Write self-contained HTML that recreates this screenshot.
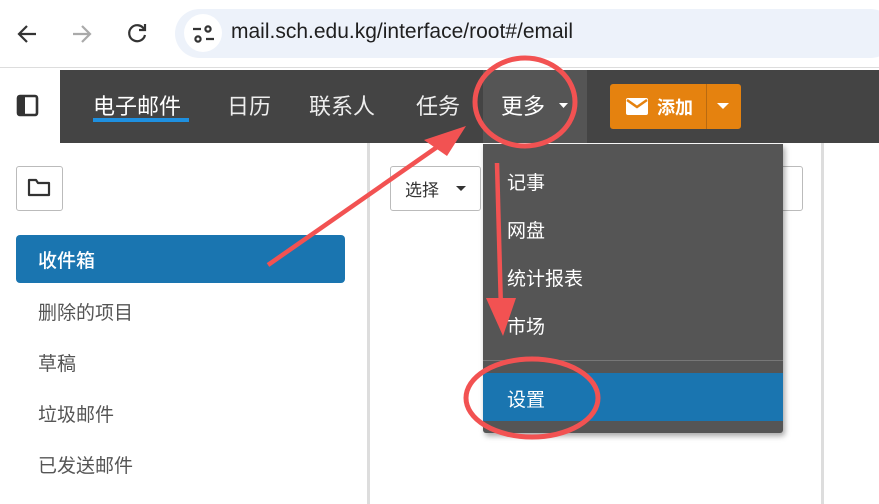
<!DOCTYPE html>
<html><head><meta charset="utf-8"><style>
*{margin:0;padding:0;box-sizing:border-box}
body{width:879px;height:504px;overflow:hidden;background:#fff;font-family:"Liberation Sans","Noto Sans CJK SC",sans-serif;position:relative}
.a{position:absolute}
.cn{font-family:"Noto Sans CJK SC",sans-serif}
</style></head><body>
<div class="a" style="left:0;top:0;width:879px;height:68px;background:#fff;border-bottom:1px solid #ddd"></div>
<div class="a" style="left:175px;top:9px;width:720px;height:49px;background:#edf2fa;border-radius:25px"></div>
<div class="a" style="left:184px;top:14px;width:38px;height:38px;background:#fff;border-radius:50%"></div>
<svg class="a" style="left:0;top:0" width="230" height="68">
<g fill="none" stroke="#333" stroke-width="2.2">
<path d="M36 34H20M27 26l-8 8 8 8"/>
<path d="M73 34h16M82 26l8 8-8 8" stroke="#aaa"/>
<path d="M144 29a8 8 0 1 0 1 6" /><path d="M145 24v6h-6"/>
<path d="M193 29h8M206 39h8"/>
<circle cx="208" cy="29" r="2.6"/><circle cx="198" cy="39" r="2.6"/>
</g>
</svg>
<div class="a" style="left:231px;top:20px;font-size:21px;color:#1f1f1f">mail.sch.edu.kg/interface/root#/email</div>
<svg class="a" style="left:16px;top:94px" width="24" height="24"><rect x="2" y="2" width="19" height="19" rx="2" fill="none" stroke="#333" stroke-width="2.6"/><rect x="3" y="3" width="6" height="17" fill="#333"/></svg>
<div class="a" style="left:60px;top:70px;width:819px;height:73px;background:#444"></div>
<div class="a" style="left:483px;top:70px;width:104px;height:73px;background:#555"></div>
<div class="a cn" style="left:93px;top:89px;font-size:22px;color:#fff">电子邮件</div>
<div class="a" style="left:93px;top:118px;width:96px;height:4px;background:#1e90e0"></div>
<div class="a cn" style="left:227px;top:89px;font-size:22px;color:#eee">日历</div>
<div class="a cn" style="left:309px;top:89px;font-size:22px;color:#eee">联系人</div>
<div class="a cn" style="left:416px;top:89px;font-size:22px;color:#eee">任务</div>
<div class="a cn" style="left:501px;top:89px;font-size:22px;color:#fff">更多</div>
<svg class="a" style="left:558px;top:102px" width="12" height="8"><path d="M1 1h9l-4.5 5z" fill="#fff"/></svg>
<div class="a" style="left:610px;top:84px;width:131px;height:45px;background:#e5820f;border-radius:3px"></div>
<div class="a" style="left:706px;top:84px;width:1px;height:45px;background:#b96a10"></div>
<svg class="a" style="left:626px;top:98px" width="22" height="17"><rect x="0" y="0" width="22" height="17" rx="2" fill="#fff"/><path d="M1 2l10 7 10-7" fill="none" stroke="#e5820f" stroke-width="2.5"/></svg>
<div class="a cn" style="left:657px;top:94px;font-size:18px;color:#fff;font-weight:bold">添加</div>
<svg class="a" style="left:716px;top:102px" width="14" height="8"><path d="M1 1h12l-6 6z" fill="#fff"/></svg>
<div class="a" style="left:16px;top:166px;width:47px;height:45px;border:1px solid #bbb;border-radius:3px"></div>
<svg class="a" style="left:27px;top:178px" width="26" height="22"><path d="M2 2h7l2 3h11v12H2z" fill="none" stroke="#333" stroke-width="2.2" stroke-linejoin="round"/></svg>
<div class="a" style="left:16px;top:235px;width:329px;height:48px;background:#1a75b0;border-radius:4px"></div>
<div class="a cn" style="left:38px;top:246px;font-size:19px;color:#fff;font-weight:500">收件箱</div>
<div class="a cn" style="left:38px;top:298px;font-size:19px;color:#555">删除的项目</div>
<div class="a cn" style="left:38px;top:349px;font-size:19px;color:#555">草稿</div>
<div class="a cn" style="left:38px;top:400px;font-size:19px;color:#555">垃圾邮件</div>
<div class="a cn" style="left:38px;top:451px;font-size:19px;color:#555">已发送邮件</div>
<div class="a" style="left:367px;top:143px;width:3px;height:361px;background:#ddd"></div>
<div class="a" style="left:821px;top:143px;width:3px;height:361px;background:#ddd"></div>
<div class="a" style="left:390px;top:166px;width:91px;height:45px;border:1px solid #bbb;border-radius:3px"></div>
<div class="a cn" style="left:405px;top:176px;font-size:17px;color:#333">选择</div>
<svg class="a" style="left:456px;top:186px" width="10" height="6"><path d="M0 0h10l-5 5z" fill="#333"/></svg>
<div class="a" style="left:700px;top:166px;width:103px;height:45px;border:1px solid #bbb;border-radius:3px"></div>
<div class="a" style="left:483px;top:144px;width:300px;height:289px;background:#555;border-radius:0 0 3px 3px;box-shadow:2px 3px 6px rgba(0,0,0,.35)"></div>
<div class="a cn" style="left:507px;top:168px;font-size:19px;color:#fff">记事</div>
<div class="a cn" style="left:507px;top:216px;font-size:19px;color:#fff">网盘</div>
<div class="a cn" style="left:507px;top:264px;font-size:19px;color:#fff">统计报表</div>
<div class="a cn" style="left:507px;top:312px;font-size:19px;color:#fff">市场</div>
<div class="a" style="left:483px;top:360px;width:300px;height:1px;background:#777"></div>
<div class="a" style="left:483px;top:373px;width:300px;height:48px;background:#1a75b0"></div>
<div class="a cn" style="left:507px;top:385px;font-size:19px;color:#fff">设置</div>
<svg class="a" style="left:0;top:0" width="879" height="504">
<g fill="none" stroke="#f25252" stroke-width="5">
<ellipse cx="525" cy="102" rx="50" ry="44"/>
<ellipse cx="532" cy="398" rx="66" ry="39"/>
</g>
<path d="M268 265L440 145" stroke="#f25252" stroke-width="4.5"/>
<path d="M466 126L424 140L447 156z" fill="#f25252"/>
<path d="M497 163L501 310" stroke="#f25252" stroke-width="4.5"/>
<path d="M486 298L503 336L516 298z" fill="#f25252"/>
</svg>
</body></html>
